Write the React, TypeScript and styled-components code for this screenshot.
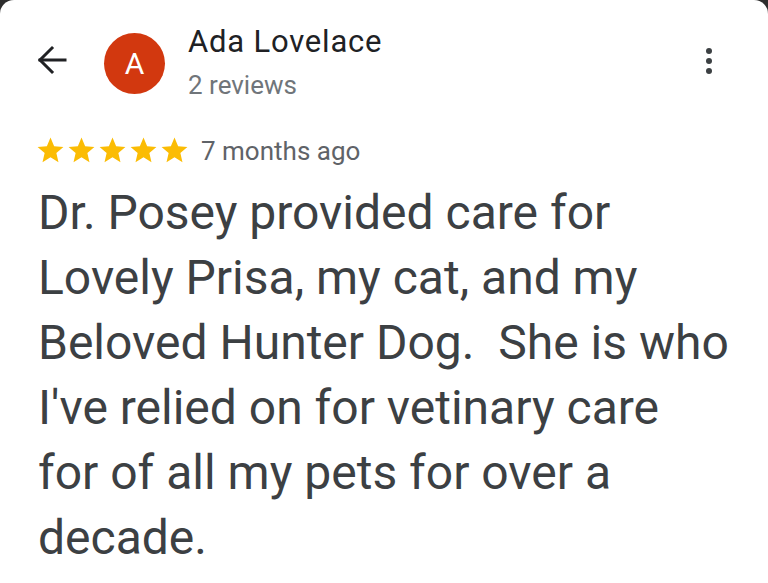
import React from "react";
import styled, { createGlobalStyle } from "styled-components";

const Global = createGlobalStyle`
  html, body { margin: 0; padding: 0; background: #2d2d2d; }
  body { font-family: Roboto, "Noto Sans", Arial, sans-serif; }
  #root { min-height: 583px; }
`;

const Card = styled.div`
  background: #ffffff;
  min-height: 583px;
  border-radius: 14px 14px 0 0;
  box-sizing: border-box;
  padding: 22px 0 0 37px;
  overflow: hidden;
`;

const Header = styled.div`
  display: flex;
  align-items: center;
`;

const IconButton = styled.button`
  border: 0;
  background: none;
  padding: 0;
  margin: 0;
  display: flex;
  align-items: center;
  justify-content: center;
  color: #202124;
  cursor: pointer;
`;

const BackButton = styled(IconButton)`
  width: 30px;
  height: 30px;
  margin-top: -4px;
  margin-right: 37px;
`;

const Avatar = styled.div`
  width: 61px;
  height: 61px;
  border-radius: 50%;
  background: #d2380f;
  color: #ffffff;
  font-size: 30px;
  display: flex;
  align-items: center;
  justify-content: center;
  flex-shrink: 0;
  margin-top: 2px;
`;

const NameBlock = styled.div`
  margin-left: 23px;
  display: flex;
  flex-direction: column;
  gap: 8px;
  flex: 1;
`;

const Name = styled.div`
  font-size: 31px;
  line-height: 36px;
  letter-spacing: 0.8px;
  color: #202124;
  margin-top: 2px;
`;

const Sub = styled.div`
  font-size: 26px;
  line-height: 34px;
  color: #70757a;
`;

const MoreButton = styled(IconButton)`
  width: 24px;
  height: 36px;
  margin-right: 47px;
  margin-top: -3px;
`;

const RatingRow = styled.div`
  display: flex;
  align-items: center;
  margin-top: 33px;
  height: 31px;
`;

const Stars = styled.div`
  display: flex;
  margin-left: -2px;
  margin-right: 11px;
`;

const Ago = styled.span`
  font-size: 26px;
  line-height: 30px;
  color: #5f6368;
`;

const Body = styled.p`
  margin: 14px 0 0 1px;
  font-size: 48px;
  line-height: 65px;
  color: #3c4043;
  white-space: pre-wrap;
`;

const Star = () => (
  <svg width="31" height="31" viewBox="0 0 24 24">
    <path
      fill="#fbbc04"
      d="M12 17.27L18.18 21l-1.64-7.03L22 9.24l-7.19-.61L12 2 9.19 8.63 2 9.24l5.46 4.73L5.82 21z"
    />
  </svg>
);

const reviewLines = [
  "Dr. Posey provided care for",
  "Lovely Prisa, my cat, and my",
  "Beloved Hunter Dog.  She is who",
  "I've relied on for vetinary care",
  "for of all my pets for over a",
  "decade.",
];

export default function App() {
  return (
    <>
      <Global />
      <Card>
        <Header>
          <BackButton aria-label="Back">
            <svg width="30" height="30" viewBox="0 0 30 30" fill="none" stroke="#202124" strokeWidth="3" strokeLinecap="square">
              <path d="M3 15H28" />
              <path d="M15 3L3 15L15 27" />
            </svg>
          </BackButton>
          <Avatar>A</Avatar>
          <NameBlock>
            <Name>Ada Lovelace</Name>
            <Sub>2 reviews</Sub>
          </NameBlock>
          <MoreButton aria-label="More">
            <svg width="24" height="36" viewBox="0 0 24 36">
              <circle cx="12" cy="8" r="3" fill="#3c4043" />
              <circle cx="12" cy="18" r="3" fill="#3c4043" />
              <circle cx="12" cy="28" r="3" fill="#3c4043" />
            </svg>
          </MoreButton>
        </Header>
        <RatingRow>
          <Stars>
            <Star />
            <Star />
            <Star />
            <Star />
            <Star />
          </Stars>
          <Ago>7 months ago</Ago>
        </RatingRow>
        <Body>
          {reviewLines.map((line, i) => (
            <React.Fragment key={i}>
              {line}
              {i < reviewLines.length - 1 && <br />}
            </React.Fragment>
          ))}
        </Body>
      </Card>
    </>
  );
}
